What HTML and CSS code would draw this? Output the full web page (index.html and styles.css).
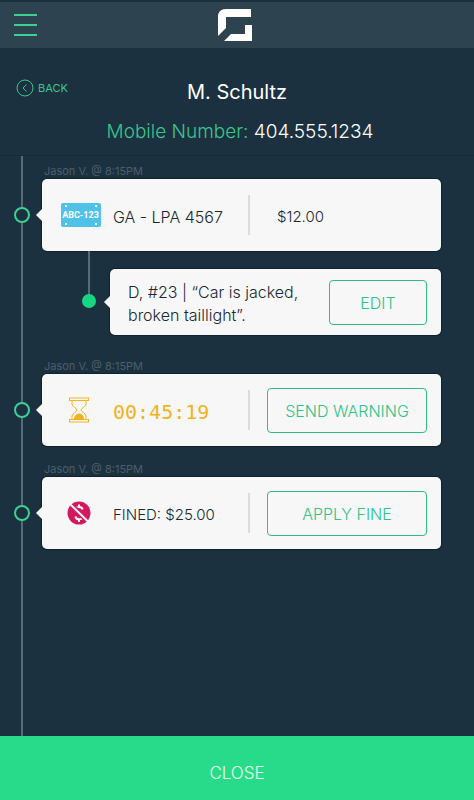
FILE: index.html
```html
<!DOCTYPE html>
<html lang="en">
<head>
  <meta charset="UTF-8">
  <meta name="viewport" content="width=device-width, initial-scale=1.0">
  <title>M. Schultz</title>
  <link rel="stylesheet" href="styles.css">
</head>
<body>
  <header class="topbar">
    <button type="button" class="menu-btn" aria-label="Menu">
      <span></span>
      <span></span>
      <span></span>
    </button>
    <svg class="logo" width="36" height="34" viewBox="0 0 36 34" aria-hidden="true">
      <path fill="#fff" d="M9 1H34V9H9V20L1 28V9Q1 1 9 1ZM28 17H35V33H7L14 26H28Z"/>
    </svg>
  </header>

  <section class="profile">
    <a href="#" class="back">
      <svg width="18" height="18" viewBox="0 0 18 18" fill="none" stroke="currentColor" aria-hidden="true">
        <circle cx="9" cy="9" r="8"/>
        <path d="M10.500 5.500L7 9L10.500 12.500"/>
      </svg>
      BACK
    </a>
    <h1>M. Schultz</h1>
    <p class="phone"><span>Mobile Number:</span> 404.555.1234</p>
  </section>

  <main class="timeline">
    <!-- Plate -->
    <article class="entry">
      <p class="stamp">Jason V. @ 8:15PM</p>
      <div class="card">
        <div class="icon"><span class="plate">ABC-123</span></div>
        <p>GA - LPA 4567</p>
        <div class="action"><p class="price amount">$12.00</p></div>
      </div>
      <div class="branch">
        <div class="card note">
          <p>D, #23 | “Car is jacked, broken taillight”.</p>
          <button type="button" class="btn">EDIT</button>
        </div>
      </div>
    </article>

    <!-- Timer -->
    <article class="entry">
      <p class="stamp">Jason V. @ 8:15PM</p>
      <div class="card">
        <div class="icon">
          <svg width="20" height="26" viewBox="0 0 20 26" fill="none" stroke="#efb420" aria-hidden="true">
            <rect x="0.500" y="1" width="19" height="2.500"/>
            <rect x="0.500" y="22.500" width="19" height="2.500"/>
            <path d="M3 3.500V7C3 10 8 11 8 13C8 15 3 16 3 19V22.500M17 3.500V7C17 10 12 11 12 13C12 15 17 16 17 19V22.500"/>
            <path fill="#efb420" d="M5.500 22C5.500 18.500 8 17 10 17S14.500 18.500 14.500 22Z"/>
          </svg>
        </div>
        <p class="timer">00:45:19</p>
        <div class="action"><button type="button" class="btn">SEND WARNING</button></div>
      </div>
    </article>

    <!-- Fine -->
    <article class="entry">
      <p class="stamp">Jason V. @ 8:15PM</p>
      <div class="card">
        <div class="icon">
          <svg width="24" height="24" viewBox="0 0 24 24" fill="none" stroke="#f7f7f7" aria-hidden="true">
            <circle cx="12" cy="12" r="11.500" fill="#d41860" stroke="none"/>
            <path stroke-width="2" d="M12 3.500V6M12 18V21M15.500 8.500C15 5 8.500 5 8.500 9C8.500 12.500 15.500 11.500 15.500 15.500C15.500 19.500 9 19 8.500 15.500"/>
            <path stroke="#d41860" stroke-width="5" d="M5 4.500L20 19.500"/>
            <path stroke-width="2" d="M2 2L22 21.500"/>
          </svg>
        </div>
        <p class="amount">FINED: $25.00</p>
        <div class="action"><button type="button" class="btn">APPLY FINE</button></div>
      </div>
    </article>
  </main>

  <button type="button" class="close-btn">CLOSE</button>
</body>
</html>
```
FILE: styles.css
```css
*, *::before, *::after {
  box-sizing: border-box;
}

body {
  margin: 0;
  min-height: 100vh;
  display: flex;
  flex-direction: column;
  background: #1c313f;
  color: #182834;
  font-family: "Inter", sans-serif;
  font-size: 16px;
  font-weight: 300;
}

h1, p {
  margin: 0;
}

button {
  font-family: inherit;
  font-weight: 300;
  cursor: pointer;
}

/* Top bar */
.topbar {
  display: grid;
  grid-template-columns: 1fr auto 1fr;
  align-items: center;
  height: 48px;
  padding: 0 18px 0 14px;
  border-top: 2px solid #1c313f;
  background: #2d434f;
}

.menu-btn {
  width: 23px;
  height: 22px;
  padding: 0;
  border: none;
  background: none;
  display: flex;
  flex-direction: column;
  justify-content: space-between;
}

.menu-btn span {
  width: 100%;
  height: 2px;
  background: #3fcf94;
}

.logo {
  display: block;
}

/* Profile */
.profile {
  position: relative;
  padding: 30px 16px 9px;
  text-align: center;
  color: #fff;
  border-bottom: 1px solid #182b38;
}

.back {
  position: absolute;
  left: 16px;
  top: 31px;
  display: flex;
  align-items: center;
  gap: 4px;
  color: #3ac78d;
  font-size: 11px;
  font-weight: 400;
  text-decoration: none;
}

h1 {
  font-size: 20px;
  line-height: 28px;
  font-weight: 400;
}

.phone {
  margin-top: 12px;
  padding-left: 6px;
  font-size: 19px;
  line-height: 28px;
}

.phone span {
  color: #3ac78d;
}

/* Timeline */
.timeline {
  position: relative;
  flex: 1;
  padding: 6px 33px 24px 42px;
}

.timeline::before {
  content: "";
  position: absolute;
  top: 0;
  bottom: 0;
  left: 21px;
  width: 2px;
  background: #566b77;
}

.entry {
  margin-bottom: 14px;
}

.stamp {
  padding: 2px 0 0 2px;
  color: #4b5f6b;
  font-size: 11px;
  line-height: 15px;
  font-weight: 400;
}

.card {
  position: relative;
  display: grid;
  grid-template-columns: 41px 1fr 179px;
  align-items: center;
  column-gap: 12px;
  min-height: 72px;
  padding: 0 14px 0 18px;
  border-radius: 5px;
  background: #f7f7f7;
  box-shadow: 0 0 1px 1px #11212c;
}

.card p {
  padding-top: 3px;
}

/* pointer towards the line */
.card::before {
  content: "";
  position: absolute;
  left: -6px;
  top: 50%;
  margin-top: -6px;
  border: 6px solid transparent;
  border-left: none;
  border-right-color: #f7f7f7;
}

/* timeline dot */
.card::after {
  content: "";
  position: absolute;
  left: -28px;
  top: 50%;
  width: 16px;
  height: 16px;
  margin-top: -8px;
  border: 2px solid #3fcf94;
  border-radius: 50%;
  background: #1c313f;
}

.icon {
  display: flex;
  justify-content: center;
  padding-right: 4px;
}

.plate {
  flex: none;
  width: 40px;
  margin-right: -4px;
  border-radius: 2px;
  background:
    radial-gradient(circle, #fff 1px, transparent 1px) 2px 0 / 6px 6px no-repeat,
    radial-gradient(circle, #fff 1px, transparent 1px) 32px 0 / 6px 6px no-repeat,
    radial-gradient(circle, #fff 1px, transparent 1px) 2px 18px / 6px 6px no-repeat,
    radial-gradient(circle, #fff 1px, transparent 1px) 32px 18px / 6px 6px no-repeat,
    #50c1e9;
  color: #fff;
  font-family: "Roboto", sans-serif;
  font-size: 9px;
  font-weight: 700;
  line-height: 24px;
  text-align: center;
  white-space: nowrap;
}

.amount {
  font-size: 15px;
}

.action {
  display: flex;
  align-items: center;
  height: 40px;
  padding-left: 17px;
  border-left: 2px solid #dcdcdc;
}

.price {
  padding-left: 10px;
}

.btn {
  width: 100%;
  height: 45px;
  flex: none;
  padding: 2px 0 0;
  border: 1px solid #2dbd82;
  border-radius: 4px;
  background: none;
  color: #2dc488;
  font-size: 16px;
}

.timer {
  color: #efb420;
  font-family: "DejaVu Sans Mono", monospace;
  font-size: 20px;
  line-height: 24px;
}

/* Note hanging off the first entry */
.branch {
  position: relative;
  padding: 18px 0 8px 68px;
}

.branch::before {
  content: "";
  position: absolute;
  left: 46px;
  top: 0;
  width: 2px;
  height: 50px;
  background: #566b77;
}

.note {
  grid-template-columns: 1fr 98px;
  min-height: 66px;
  line-height: 23px;
}

.note::after {
  width: 14px;
  height: 14px;
  border: none;
  background: #16d583;
}

.close-btn {
  height: 64px;
  padding: 10px 0 0;
  border: none;
  background: #28db8a;
  color: #e4fbf0;
  font-size: 17px;
}
```
